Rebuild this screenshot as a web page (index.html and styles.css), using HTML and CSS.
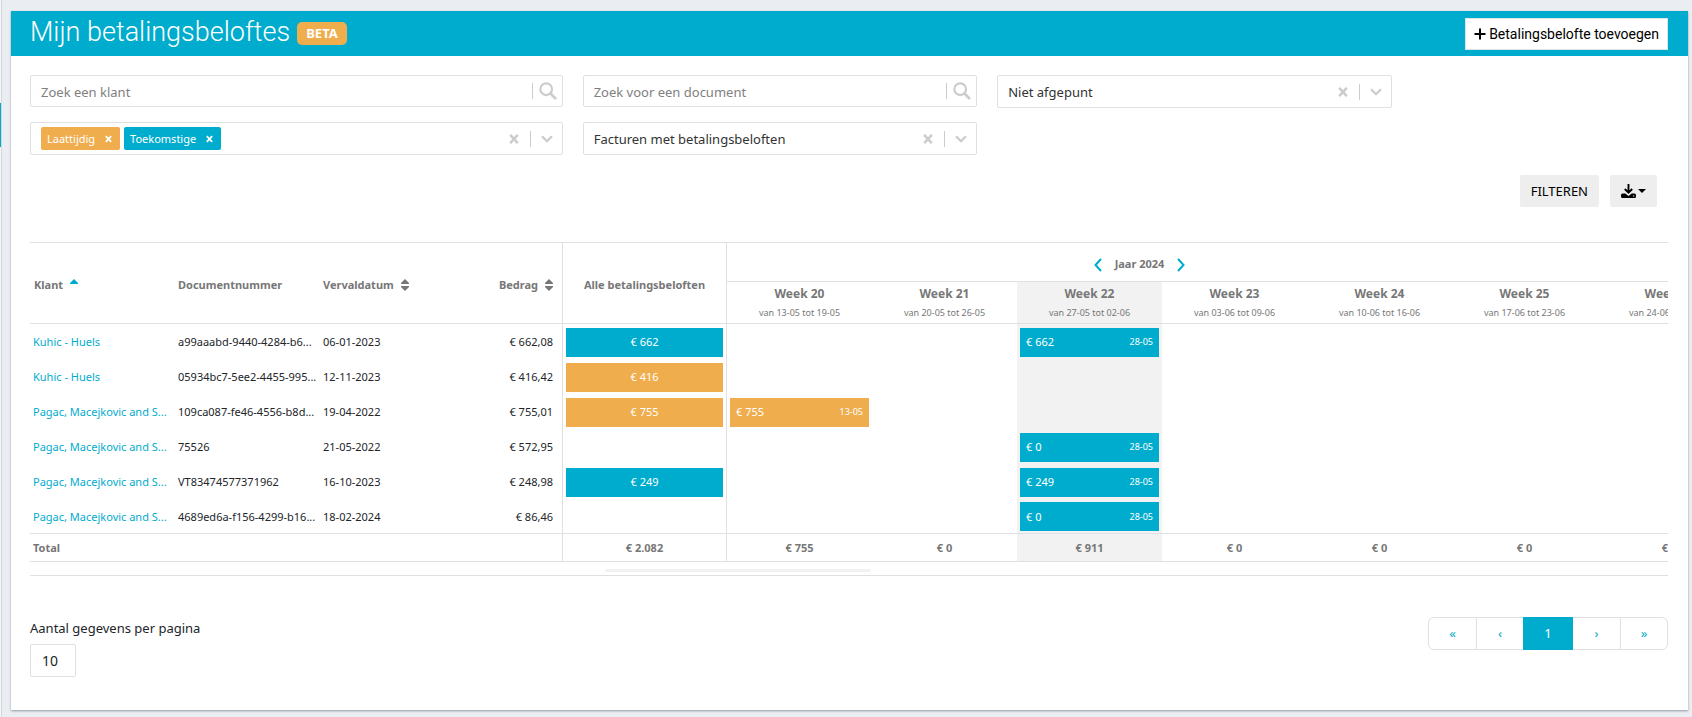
FILE: index.html
```html
<!DOCTYPE html>
<html lang="nl">
<head>
<meta charset="utf-8">
<title>Mijn betalingsbeloftes</title>
<link rel="stylesheet" href="styles.css">
</head>
<body>
<svg class="defs" aria-hidden="true">
  <symbol id="search" viewBox="0 0 20 20"><circle cx="8" cy="8" r="6.5" fill="none" stroke="currentColor" stroke-width="2.4"/><path d="M12.8 12.8 18 18" stroke="currentColor" stroke-width="3" stroke-linecap="round"/></symbol>
  <symbol id="clear" viewBox="0 0 10 10"><path d="M1.200 0.800 8.800 9.200M8.800 0.800 1.200 9.200" stroke="currentColor" stroke-width="2.500"/></symbol>
  <symbol id="down" viewBox="0 0 12 8"><path d="M1 1.2 6 6.2 11 1.2" fill="none" stroke="currentColor" stroke-width="2.3"/></symbol>
  <symbol id="sort" viewBox="0 0 8 12"><path d="M4 0 8 4V5H0V4ZM0 7H8V8L4 12 0 8Z" fill="currentColor"/></symbol>
</svg>
<div class="sidebar"><span class="sidebar-active"></span></div>
<main class="card">
  <header class="card-header">
    <h1>Mijn betalingsbeloftes</h1>
    <span class="beta">BETA</span>
    <button class="add" type="button"><svg viewBox="0 0 12 12" width="12" height="12"><path d="M6 0.5V11.5M0.5 6H11.5" stroke="currentColor" stroke-width="2"/></svg>Betalingsbelofte toevoegen</button>
  </header>
  <div class="card-body">
    <form class="filters">
      <div class="field wide"><input type="text" placeholder="Zoek een klant" aria-label="Zoek een klant"><span class="sep"></span><svg class="i-search"><use href="#search"/></svg></div>
      <div class="field"><input type="text" placeholder="Zoek voor een document" aria-label="Zoek voor een document"><span class="sep"></span><svg class="i-search"><use href="#search"/></svg></div>
      <div class="field select"><select aria-label="Status"><option>Niet afgepunt</option></select><svg class="i-clear"><use href="#clear"/></svg><span class="sep"></span><svg class="i-down"><use href="#down"/></svg></div>
      <div class="field select wide"><div class="tags"><span class="tag late">Laattijdig<button type="button" aria-label="Laattijdig verwijderen"><svg class="i-x"><use href="#clear"/></svg></button></span><span class="tag">Toekomstige<button type="button" aria-label="Toekomstige verwijderen"><svg class="i-x"><use href="#clear"/></svg></button></span></div><svg class="i-clear"><use href="#clear"/></svg><span class="sep"></span><svg class="i-down"><use href="#down"/></svg></div>
      <div class="field select"><select aria-label="Facturen"><option>Facturen met betalingsbeloften</option></select><svg class="i-clear"><use href="#clear"/></svg><span class="sep"></span><svg class="i-down"><use href="#down"/></svg></div>
    </form>
    <div class="actions">
      <button type="button">FILTEREN</button>
      <button class="download" type="button" aria-label="Downloaden"><svg viewBox="0 0 15 14" width="15" height="14"><path d="M7.500 0V8M3.800 5 7.500 8.700 11.200 5" fill="none" stroke="currentColor" stroke-width="1.900"/><path d="M1.500 9.500H4.300L7.500 12 10.700 9.500H13.500Q15 9.500 15 11V12.500Q15 14 13.500 14H1.500Q0 14 0 12.500V11Q0 9.500 1.500 9.500Z" fill="currentColor"/><circle cx="12.600" cy="11.900" r=".7" fill="#eee"/></svg><svg viewBox="0 0 8 4" width="8" height="4"><path d="M0 0H8L4 4Z" fill="currentColor"/></svg></button>
    </div>
    <div class="scroller">
      <table>
        <colgroup><col class="c-text"><col class="c-text"><col class="c-text"><col class="c-amount"><col class="c-all"><col class="c-week" span="7"></colgroup>
        <thead>
          <tr class="year">
            <th rowspan="2" class="name">Klant<svg class="i-asc" viewBox="0 0 8 5"><path d="M4 0 8 4V5H0V4Z" fill="currentColor"/></svg></th>
            <th rowspan="2">Documentnummer</th>
            <th rowspan="2">Vervaldatum<svg class="i-sort"><use href="#sort"/></svg></th>
            <th rowspan="2" class="amount">Bedrag<svg class="i-sort"><use href="#sort"/></svg></th>
            <th rowspan="2" class="all">Alle betalingsbeloften</th>
            <th colspan="7" class="year-cell"><div class="year-nav"><button type="button" aria-label="Vorig jaar"><svg viewBox="0 0 8 14" width="8" height="14"><path d="M7 1 1.500 7 7 13" fill="none" stroke="currentColor" stroke-width="2"/></svg></button>Jaar 2024<button type="button" aria-label="Volgend jaar"><svg viewBox="0 0 8 14" width="8" height="14"><path d="M1 1 6.500 7 1 13" fill="none" stroke="currentColor" stroke-width="2"/></svg></button></div></th>
          </tr>
          <tr class="weeks">
            <th>Week 20<small>van 13-05 tot 19-05</small></th>
            <th>Week 21<small>van 20-05 tot 26-05</small></th>
            <th class="now">Week 22<small>van 27-05 tot 02-06</small></th>
            <th>Week 23<small>van 03-06 tot 09-06</small></th>
            <th>Week 24<small>van 10-06 tot 16-06</small></th>
            <th>Week 25<small>van 17-06 tot 23-06</small></th>
            <th>Week 26<small>van 24-06 tot 30-06</small></th>
          </tr>
        </thead>
        <tbody>
          <tr><td><a href="#">Kuhic - Huels</a></td><td>a99aaabd-9440-4284-b6...</td><td>06-01-2023</td><td class="amount">€ 662,08</td><td class="all"><div class="bar">€ 662</div></td><td></td><td></td><td class="now"><div class="bar"><span>€ 662</span><small>28-05</small></div></td><td></td><td></td><td></td><td></td></tr>
          <tr><td><a href="#">Kuhic - Huels</a></td><td>05934bc7-5ee2-4455-995...</td><td>12-11-2023</td><td class="amount">€ 416,42</td><td class="all"><div class="bar late">€ 416</div></td><td></td><td></td><td class="now"></td><td></td><td></td><td></td><td></td></tr>
          <tr><td><a href="#">Pagac, Macejkovic and S...</a></td><td>109ca087-fe46-4556-b8d...</td><td>19-04-2022</td><td class="amount">€ 755,01</td><td class="all"><div class="bar late">€ 755</div></td><td><div class="bar late"><span>€ 755</span><small>13-05</small></div></td><td></td><td class="now"></td><td></td><td></td><td></td><td></td></tr>
          <tr><td><a href="#">Pagac, Macejkovic and S...</a></td><td>75526</td><td>21-05-2022</td><td class="amount">€ 572,95</td><td class="all"></td><td></td><td></td><td class="now"><div class="bar"><span>€ 0</span><small>28-05</small></div></td><td></td><td></td><td></td><td></td></tr>
          <tr><td><a href="#">Pagac, Macejkovic and S...</a></td><td>VT83474577371962</td><td>16-10-2023</td><td class="amount">€ 248,98</td><td class="all"><div class="bar">€ 249</div></td><td></td><td></td><td class="now"><div class="bar"><span>€ 249</span><small>28-05</small></div></td><td></td><td></td><td></td><td></td></tr>
          <tr><td><a href="#">Pagac, Macejkovic and S...</a></td><td>4689ed6a-f156-4299-b16...</td><td>18-02-2024</td><td class="amount">€ 86,46</td><td class="all"></td><td></td><td></td><td class="now"><div class="bar"><span>€ 0</span><small>28-05</small></div></td><td></td><td></td><td></td><td></td></tr>
        </tbody>
        <tfoot>
          <tr><th colspan="4" class="total">Total</th><td class="all">€ 2.082</td><td>€ 755</td><td>€ 0</td><td class="now">€ 911</td><td>€ 0</td><td>€ 0</td><td>€ 0</td><td>€ 0</td></tr>
        </tfoot>
      </table>
    </div>
    <div class="track"><div class="thumb"></div></div>
    <footer class="pager">
      <div class="page-size"><label for="size">Aantal gegevens per pagina</label><input id="size" type="text" value="10"></div>
      <nav class="pages" aria-label="Pagina's"><a href="#">«</a><a href="#">‹</a><a href="#" class="current">1</a><a href="#">›</a><a href="#">»</a></nav>
    </footer>
  </div>
</main>
</body>
</html>
```
FILE: styles.css
```css
* { box-sizing: border-box; }

body {
  display: flex;
  min-height: 100vh;
  margin: 0;
  background: #eaeef3;
  color: #212529;
  font: 13px/20px "Noto Sans", "Open Sans", sans-serif;
}

button, input, select { font: inherit; color: inherit; }
a { color: #00accd; text-decoration: none; }
.defs { position: absolute; width: 0; height: 0; }

.sidebar { width: 2px; background: #f5f6f8; border-right: 1px solid #d3d6dc; padding-top: 103px; }
.sidebar-active { display: block; width: 1px; height: 44px; background: #00accd; }

.card {
  flex: 1;
  min-width: 0;
  margin: 11px 4px 7px 9px;
  background: #fff;
  box-shadow: 0 1px 2px rgba(60, 70, 80, .5);
}

.card-header {
  display: flex;
  align-items: center;
  height: 45px;
  padding: 0 20px 0 19px;
  background: #00accd;
  color: #fff;
}
.card-header h1 {
  margin: 0 7px 4px 0;
  font: 300 27px/40px Roboto, sans-serif;
}
.beta {
  padding: 0 9px;
  border-radius: 5px;
  background: #f0ad4e;
  font-weight: 700;
  line-height: 23px;
}
.add {
  display: flex;
  align-items: center;
  gap: 3px;
  height: 32px;
  margin-left: auto;
  padding: 0 8px;
  border: 1px solid #dde3e6;
  background: #fff;
  color: #000;
  font: 14px/20px Roboto, sans-serif;
}

.card-body { padding: 19px 20px 33px 19px; }

.filters {
  display: grid;
  grid-template-columns: repeat(12, minmax(0, 1fr));
  gap: 14px 20px;
  align-items: start;
}
.field {
  display: flex;
  align-items: center;
  grid-column: span 3;
  height: 32px;
  padding: 0 5px 0 10px;
  border: 1px solid #dee0e4;
  border-radius: 2px;
  color: #ccc;
}
.field.wide { grid-column: 1 / span 4; }
.field.select { height: 33px; padding-right: 9px; }
.field input, .field select {
  flex: 1;
  min-width: 0;
  height: 30px;
  padding: 1px 0 0;
  border: 0;
  outline: 0;
  background: none;
  color: #333;
  appearance: none;
}
.field input::placeholder { color: #808080; opacity: 1; }
.sep { width: 1px; height: 16px; background: #ccc; }
.i-search { width: 18px; height: 18px; margin-left: 6px; }
.i-clear { width: 10px; height: 10px; margin-right: 11px; }
.i-down { width: 12px; height: 8px; margin-left: 10px; }

.tags { display: flex; flex: 1; gap: 4px; }
.tag {
  display: flex;
  align-items: center;
  gap: 10px;
  height: 23px;
  padding: 0 8px 0 6px;
  border-radius: 2px;
  background: #00accd;
  color: #fff;
  font-size: 11px;
}
.tag.late, .bar.late { background: #f0ad4e; }
.tag button { display: flex; padding: 0; border: 0; background: none; }
.i-x { width: 7px; height: 8px; }

.actions { display: flex; justify-content: flex-end; gap: 11px; padding: 20px 11px 35px; }
.actions button {
  display: flex;
  align-items: center;
  gap: 2px;
  height: 32px;
  padding: 0 11px;
  border: 0;
  border-radius: 2px;
  background: #eee;
  color: #000;
}

.scroller { overflow: hidden; }
table {
  width: 1712px;
  border-collapse: separate;
  border-spacing: 0;
  table-layout: fixed;
  font-size: 11px;
  line-height: 16px;
}
.c-text { width: 145px; }
.c-amount { width: 97px; }
.c-all { width: 165px; }
.c-week { width: 145px; }

th, td { padding: 3px; text-align: left; white-space: nowrap; }
th { color: #777; }
thead th { padding-top: 6px; border-bottom: 1px solid #dee0e4; }
.year th { border-top: 1px solid #dee0e4; }
.name { padding-left: 4px; }
.year { height: 40px; }
.year .year-cell { padding: 3px 190px 0 0; }
.year-nav { display: flex; justify-content: center; gap: 13px; }
.year-nav button { display: flex; align-items: center; padding: 2px 0 0; border: 0; background: none; color: #00accd; }
.weeks { height: 42px; }
.weeks th { text-align: center; padding: 0; line-height: 19px; font-size: 12px; }
.weeks small { display: block; font-size: 9px; font-weight: 400; }
.i-asc { width: 8px; height: 5px; margin: 0 0 5px 7px; color: #00accd; }
.i-sort { width: 8px; height: 12px; margin-left: 7px; vertical-align: -2px; }

tbody tr { height: 35px; }
tbody tr:last-child { height: 34px; }
tbody td { padding-top: 3px; padding-bottom: 2px; }
.amount { padding-right: 9px; text-align: right; }
th.all, td.all { border-left: 1px solid #dee0e4; border-right: 1px solid #dee0e4; text-align: center; }
.now { background: #f2f2f2; }
.bar {
  display: flex;
  align-items: center;
  justify-content: center;
  height: 29px;
  padding: 0 6px;
  background: #00accd;
  color: #fff;
}
.bar span { flex: 1; }
.bar small { font-size: 9px; }

tfoot tr { height: 29px; }
tfoot th, tfoot td {
  border-top: 1px solid #dee0e4;
  border-bottom: 1px solid #dee0e4;
  color: #777;
  font-weight: 700;
  text-align: center;
}
tfoot .total { text-align: left; }

.track { height: 14px; padding: 7px 0 0 35%; border-bottom: 1px solid #dee0e4; }
.thumb { width: 266px; height: 3px; margin-left: 2px; border-radius: 2px; background: #f2f2f2; }

.pager { display: flex; justify-content: space-between; padding-top: 41px; }
.page-size { display: flex; flex-direction: column; align-items: flex-start; gap: 6px; padding-top: 1px; }
.page-size input { width: 46px; height: 33px; padding: 0 11px; border: 1px solid #dee0e4; border-radius: 2px; font-size: 14px; }
.pages { display: flex; align-self: flex-start; border: 1px solid #dee0e4; border-radius: 6px; }
.pages a { width: 47px; line-height: 31px; text-align: center; border-left: 1px solid #dee0e4; }
.pages a:first-child { border-left: 0; }
.pages .current { width: 50px; margin: -1px 0; border: 0; background: #00accd; color: #fff; line-height: 33px; }
.pages .current + a { border-left: 0; }
```
